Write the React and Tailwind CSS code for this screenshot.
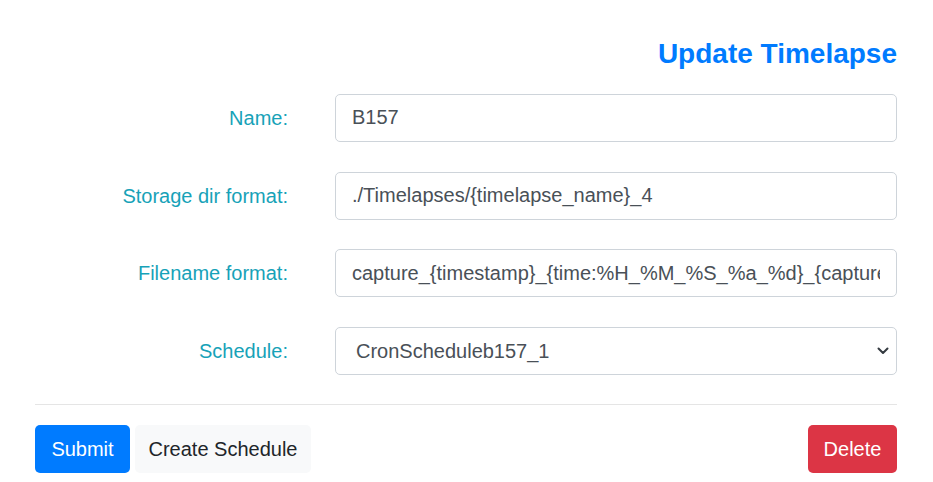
import React from "react";

const font = { fontFamily: '"Liberation Sans", Arial, sans-serif' };

function Row({ label, children }) {
  return (
    <div className="flex items-center h-[48px]">
      <div className="w-[253px] text-right text-[20px] leading-[30px] text-[#17a2b8]">{label}</div>
      <div className="ml-[47px] flex-1 min-w-0">{children}</div>
    </div>
  );
}

function Input({ value }) {
  return (
    <input
      readOnly
      defaultValue={value}
      className="block w-full h-[48px] px-[16px] text-[20px] leading-[30px] text-[#495057] bg-white border border-[#ced4da] rounded-[5px] outline-none"
      style={font}
    />
  );
}

export default function App() {
  return (
    <div className="w-[933px] h-[482px] bg-white pl-[35px] pr-[36px] pt-[37px] box-border" style={font}>
      <h3 className="text-right text-[28px] leading-[33.6px] font-bold text-[#007bff] mb-[23.4px]">
        Update Timelapse
      </h3>
      <div className="flex flex-col gap-[29.67px]">
        <Row label="Name:">
          <Input value="B157" />
        </Row>
        <Row label="Storage dir format:">
          <Input value="./Timelapses/{timelapse_name}_4" />
        </Row>
        <Row label="Filename format:">
          <Input value="capture_{timestamp}_{time:%H_%M_%S_%a_%d}_{capture_index}" />
        </Row>
        <Row label="Schedule:">
          <div className="relative flex items-center w-full h-[48px] pl-[20px] pr-[40px] text-[20px] leading-[30px] text-[#495057] bg-white border border-[#ced4da] rounded-[5px]">
            CronScheduleb157_1
            <svg
              className="absolute right-[7px] top-[19px]"
              width="12"
              height="8"
              viewBox="0 0 12 8"
              fill="none"
            >
              <path d="M1.5 1.5 L6 6 L10.5 1.5" stroke="#343a40" strokeWidth="2" strokeLinecap="round" strokeLinejoin="round" />
            </svg>
          </div>
        </Row>
      </div>
      <hr className="mt-[29px] mb-[20px] border-0 border-t border-[rgba(0,0,0,0.1)]" />
      <div className="flex items-center">
        <button className="w-[95px] h-[48px] text-[20px] leading-[30px] text-white bg-[#007bff] rounded-[5px] text-center" style={font}>
          Submit
        </button>
        <button className="ml-[5px] w-[176px] h-[48px] text-[20px] leading-[30px] text-[#212529] bg-[#f8f9fa] rounded-[5px] text-center whitespace-nowrap" style={font}>
          Create Schedule
        </button>
        <button className="ml-auto w-[89px] h-[48px] text-[20px] leading-[30px] text-white bg-[#dc3545] rounded-[5px] text-center" style={font}>
          Delete
        </button>
      </div>
    </div>
  );
}
